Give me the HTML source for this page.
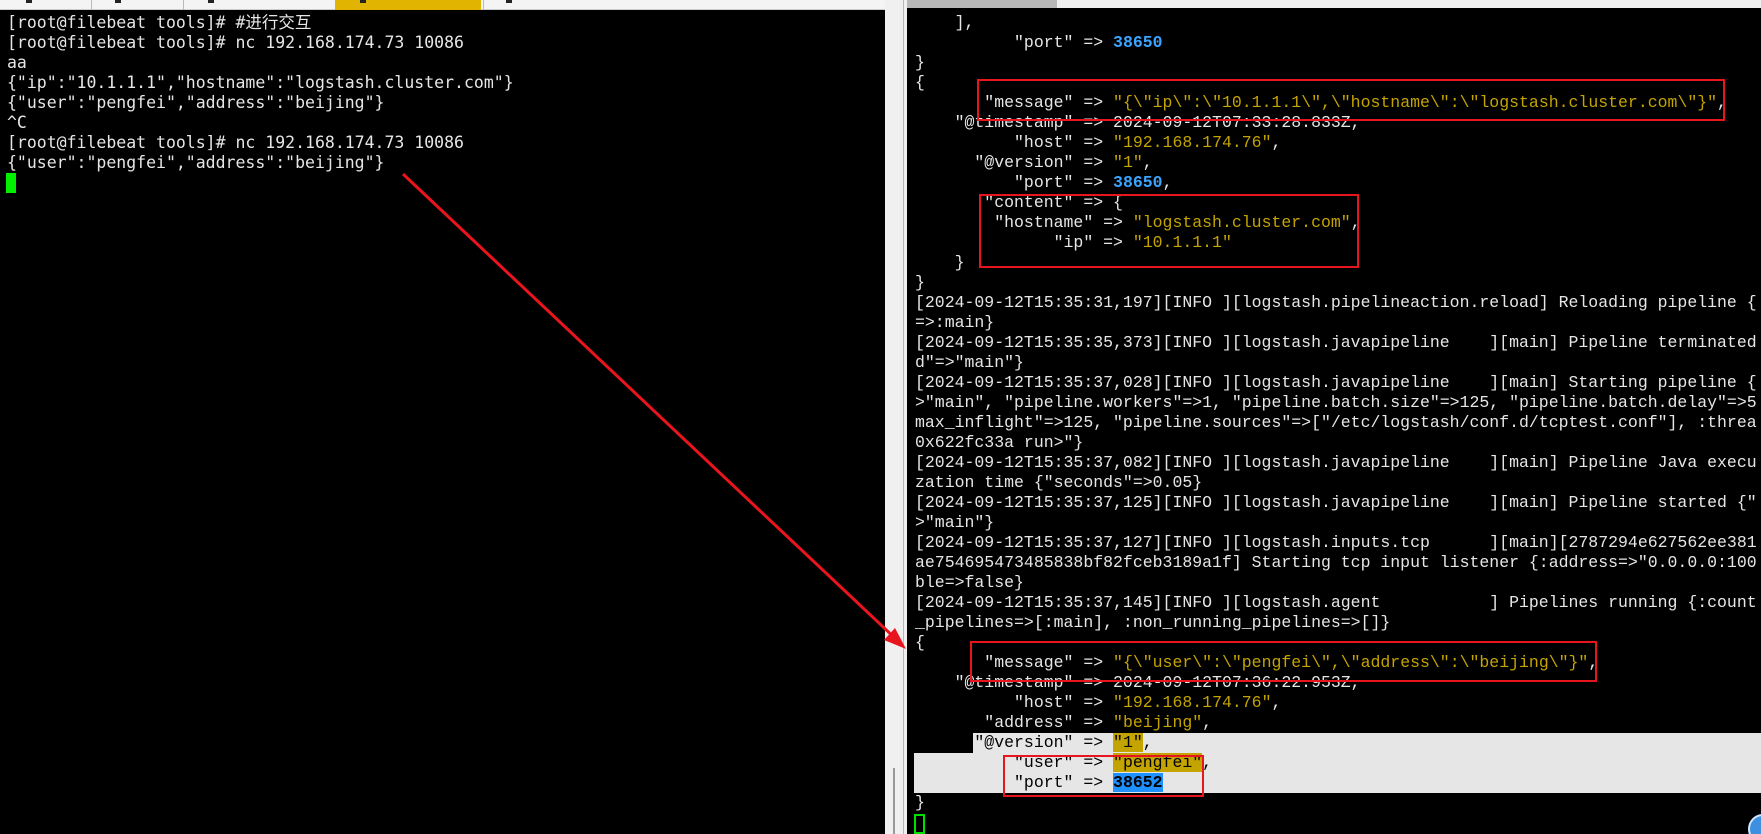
<!DOCTYPE html>
<html><head><meta charset="utf-8"><style>
*{margin:0;padding:0;box-sizing:border-box}
body{width:1761px;height:834px;background:#f0f0f0;position:relative;overflow:hidden}
.pane{position:absolute;background:#000;overflow:hidden}
pre{position:absolute;top:13px;line-height:20px;font-size:16.5px;color:#e6e6e6;white-space:pre}
#L pre{font-family:"DejaVu Sans Mono","Noto Sans CJK SC",monospace;left:7px}
#R pre{font-family:"Liberation Mono","DejaVu Sans Mono",monospace;left:8px}
.y{color:#c4a400}
.b{color:#3ba4ff;font-weight:bold}
.sel{background:#e6e6e6;color:#000}
.hy{background:#c4a400;color:#000}
.hb{background:#1e90ff;color:#000;font-weight:bold}
.box{position:absolute;border:2px solid #e8141e}
</style></head><body>
<!-- left tabs -->
<div style="position:absolute;left:0;top:0;width:885px;height:10px;background:#f4f4f4;border-bottom:1px solid #ccc"></div>
<div style="position:absolute;left:91px;top:0;width:1px;height:10px;background:#bbb"></div>
<div style="position:absolute;left:183px;top:0;width:1px;height:10px;background:#bbb"></div>
<div style="position:absolute;left:335px;top:0;width:146px;height:10px;background:#e0b400"></div>
<div style="position:absolute;left:483px;top:0;width:1px;height:10px;background:#bbb"></div>
<div style="position:absolute;left:26px;top:0;width:6px;height:3px;background:#222"></div>
<div style="position:absolute;left:115px;top:0;width:6px;height:3px;background:#222"></div>
<div style="position:absolute;left:208px;top:0;width:6px;height:3px;background:#222"></div>
<div style="position:absolute;left:360px;top:0;width:6px;height:3px;background:#222"></div>
<div style="position:absolute;left:506px;top:0;width:6px;height:3px;background:#222"></div>
<div class="pane" id="L" style="left:0;top:10px;width:885px;height:824px">
<pre style="top:3px">[root@filebeat tools]# #进行交互
[root@filebeat tools]# nc 192.168.174.73 10086
aa
{"ip":"10.1.1.1","hostname":"logstash.cluster.com"}
{"user":"pengfei","address":"beijing"}
^C
[root@filebeat tools]# nc 192.168.174.73 10086
{"user":"pengfei","address":"beijing"}</pre>
<div style="position:absolute;left:6px;top:163px;width:10px;height:20px;background:#00f000"></div>
</div>
<!-- divider -->
<div style="position:absolute;left:903px;top:0;width:1px;height:834px;background:#c8b88a"></div>
<div style="position:absolute;left:893px;top:768px;width:2px;height:66px;background:#999"></div>
<!-- right tabs -->
<div style="position:absolute;left:907px;top:0;width:150px;height:8px;background:#b8b8b8"></div>
<div class="pane" id="R" style="left:907px;top:8px;width:854px;height:826px">
<pre style="top:5px">    ],
          "port" => <span class="b">38650</span>
}
{
       "message" => <span class="y">"{\"ip\":\"10.1.1.1\",\"hostname\":\"logstash.cluster.com\"}"</span>,
    "@timestamp" => 2024-09-12T07:33:28.833Z,
          "host" => <span class="y">"192.168.174.76"</span>,
      "@version" => <span class="y">"1"</span>,
          "port" => <span class="b">38650</span>,
       "content" => {
        "hostname" => <span class="y">"logstash.cluster.com"</span>,
              "ip" => <span class="y">"10.1.1.1"</span>
    }
}
[2024-09-12T15:35:31,197][INFO ][logstash.pipelineaction.reload] Reloading pipeline {
=>:main}
[2024-09-12T15:35:35,373][INFO ][logstash.javapipeline    ][main] Pipeline terminated
d"=>"main"}
[2024-09-12T15:35:37,028][INFO ][logstash.javapipeline    ][main] Starting pipeline {
>"main", "pipeline.workers"=>1, "pipeline.batch.size"=>125, "pipeline.batch.delay"=>5
max_inflight"=>125, "pipeline.sources"=>["/etc/logstash/conf.d/tcptest.conf"], :threa
0x622fc33a run>"}
[2024-09-12T15:35:37,082][INFO ][logstash.javapipeline    ][main] Pipeline Java execu
zation time {"seconds"=>0.05}
[2024-09-12T15:35:37,125][INFO ][logstash.javapipeline    ][main] Pipeline started {"
>"main"}
[2024-09-12T15:35:37,127][INFO ][logstash.inputs.tcp      ][main][2787294e627562ee381
ae754695473485838bf82fceb3189a1f] Starting tcp input listener {:address=>"0.0.0.0:100
ble=>false}
[2024-09-12T15:35:37,145][INFO ][logstash.agent           ] Pipelines running {:count
_pipelines=>[:main], :non_running_pipelines=>[]}
{
       "message" => <span class="y">"{\"user\":\"pengfei\",\"address\":\"beijing\"}"</span>,
    "@timestamp" => 2024-09-12T07:36:22.953Z,
          "host" => <span class="y">"192.168.174.76"</span>,
       "address" => <span class="y">"beijing"</span>,
</pre>
<div class="sel" style="position:absolute;left:66px;top:725px;width:800px;height:20px"></div>
<div class="sel" style="position:absolute;left:7px;top:745px;width:860px;height:40px"></div>
<pre style="top:725px;color:#000">      "@version" => <span class="hy">"1"</span>,
          "user" => <span class="hy">"pengfei"</span>,
          "port" => <span class="hb">38652</span></pre>
<pre style="top:785px">}</pre>
<div style="position:absolute;left:7px;top:806px;width:11px;height:20px;border:2px solid #00e000"></div>
<div style="position:absolute;left:841px;top:806px;width:30px;height:30px;border-radius:50%;background:#3d8fe0;border:2px solid #cfe6ff"></div>
</div>
<!-- red boxes -->
<div class="box" style="left:977px;top:79px;width:748px;height:42px"></div>
<div class="box" style="left:979px;top:194px;width:380px;height:74px"></div>
<div class="box" style="left:970px;top:641px;width:627px;height:41px"></div>
<div class="box" style="left:1003px;top:755px;width:201px;height:42px"></div>
<svg style="position:absolute;left:0;top:0" width="1761" height="834">
<line x1="403" y1="174" x2="898" y2="641" stroke="#e8141e" stroke-width="3"/>
<polygon points="906,649 884,640 895,628" fill="#e8141e"/>
</svg>
</body></html>
